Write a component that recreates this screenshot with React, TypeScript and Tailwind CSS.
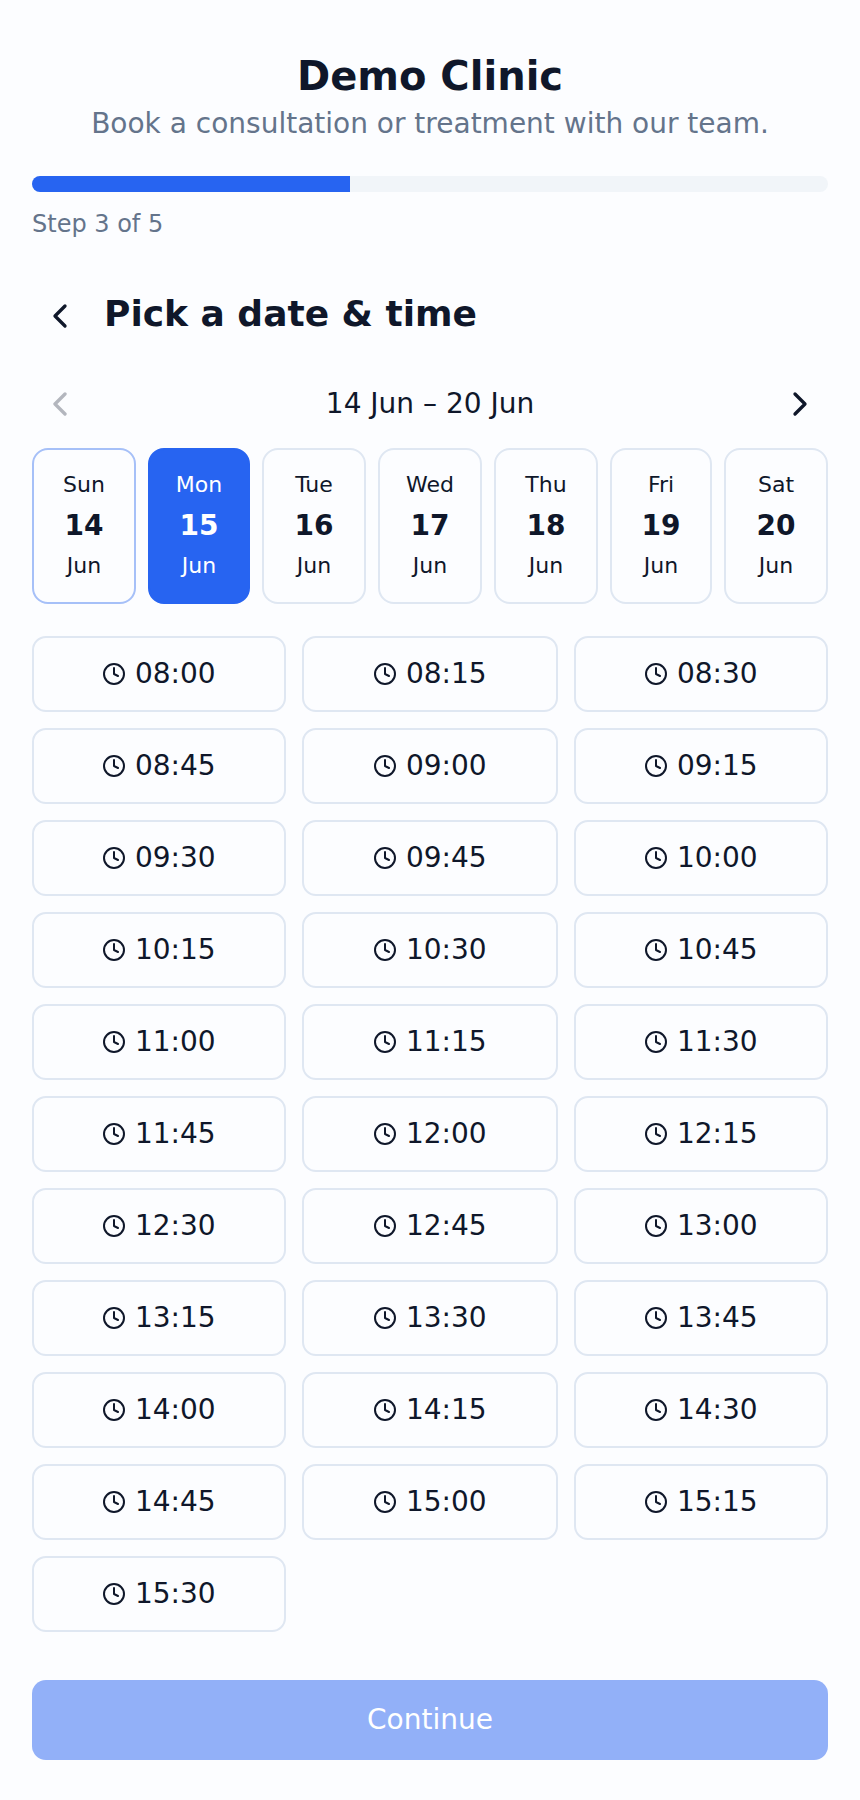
import { ChevronLeft, ChevronRight, Clock } from 'lucide-react';

const days = [
  { name: 'Sun', date: 14 },
  { name: 'Mon', date: 15 },
  { name: 'Tue', date: 16 },
  { name: 'Wed', date: 17 },
  { name: 'Thu', date: 18 },
  { name: 'Fri', date: 19 },
  { name: 'Sat', date: 20 },
];

const slots = [
  '08:00', '08:15', '08:30', '08:45', '09:00', '09:15', '09:30', '09:45', '10:00', '10:15', '10:30',
  '10:45', '11:00', '11:15', '11:30', '11:45', '12:00', '12:15', '12:30', '12:45', '13:00', '13:15',
  '13:30', '13:45', '14:00', '14:15', '14:30', '14:45', '15:00', '15:15', '15:30',
];

const DayCard = ({ name, date }: { name: string; date: number }) => {
  const selected = date === 15;
  const today = date === 14;
  return (
    <button
      className={`flex h-[156px] flex-col items-center justify-center rounded-2xl border-2 pb-[2px] ${
        selected
          ? 'border-[#2764f1] bg-[#2764f1] text-white'
          : today
            ? 'border-[#a6c0f8] text-[#0f172a]'
            : 'border-[#dfe7f2] text-[#0f172a]'
      }`}
    >
      <span className="text-[22px] leading-[33px]">{name}</span>
      <span className="mt-1 text-[28px] leading-[42px] font-bold">{date}</span>
      <span className="mt-[2px] text-[22px] leading-[33px]">Jun</span>
    </button>
  );
};

const SlotButton = ({ time }: { time: string }) => (
  <button className="flex h-[76px] items-center justify-center gap-[8.5px] rounded-[14px] border-2 border-[#dfe7f2] text-[28px] text-[#0f172a]">
    <Clock size={24} strokeWidth={2} />
    <span>{time}</span>
  </button>
);

export default function App() {
  return (
    <div className="min-h-[1800px] bg-[#fcfdff] px-8 pt-8 font-['DejaVu_Sans',sans-serif]">
      <header className="pt-4 text-center">
        <h1 className="text-[40px] leading-[56px] font-bold text-[#0f172a]">Demo Clinic</h1>
        <p className="text-[28px] leading-[40px] text-[#64748b]">Book a consultation or treatment with our team.</p>
      </header>

      <div className="mt-8 h-4 overflow-hidden rounded-full bg-[#f1f5f9]">
        <div className="h-full w-[40%] bg-[#2764f1]" />
      </div>
      <p className="mt-[14px] text-[24px] leading-[36px] text-[#64748b]">Step 3 of 5</p>

      <div className="mt-[44px] flex items-center gap-4">
        <button className="flex h-14 w-14 items-center justify-center text-[#0f172a]">
          <ChevronLeft size={40} strokeWidth={2} className="mt-1" />
        </button>
        <h2 className="text-[36px] leading-[54px] font-bold text-[#0f172a]">Pick a date &amp; time</h2>
      </div>

      <div className="mt-[34px] flex items-center justify-between">
        <button className="flex h-14 w-14 items-center justify-center text-[#0f172a] opacity-30">
          <ChevronLeft size={40} strokeWidth={2} />
        </button>
        <span className="text-[28px] leading-[42px] text-[#0f172a]">14 Jun – 20 Jun</span>
        <button className="flex h-14 w-14 items-center justify-center text-[#0f172a]">
          <ChevronRight size={40} strokeWidth={2} />
        </button>
      </div>

      <div className="mt-4 grid grid-cols-[104px_102px_104px_104px_104px_102px_104px] gap-3">
        {days.map((d) => (
          <DayCard key={d.date} name={d.name} date={d.date} />
        ))}
      </div>

      <div className="mt-8 grid grid-cols-[254px_256px_254px] gap-4">
        {slots.map((t) => (
          <SlotButton key={t} time={t} />
        ))}
      </div>

      <button className="mt-12 h-20 w-full rounded-[14px] bg-[#92b0f8] text-[28px] text-white">Continue</button>
    </div>
  );
}
